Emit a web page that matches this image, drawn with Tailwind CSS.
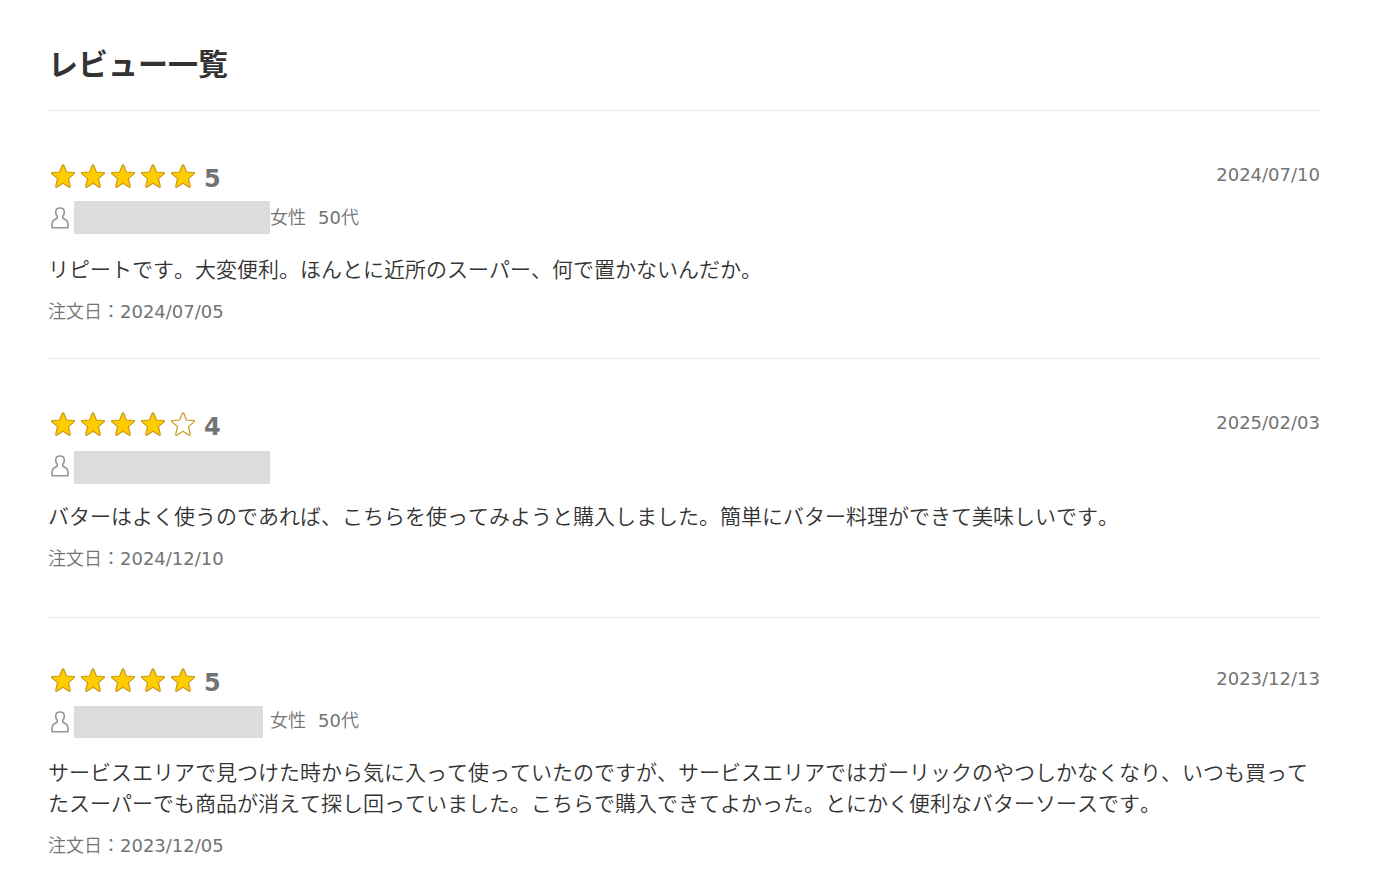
<!DOCTYPE html>
<html lang="ja">
<head>
  <meta charset="UTF-8">
  <meta name="viewport" content="width=device-width, initial-scale=1.0">
  <title>レビュー一覧</title>
  <script src="https://cdn.jsdelivr.net/npm/@tailwindcss/browser@4"></script>
</head>
<body class="bg-white text-[#333] font-['DejaVu_Sans','Noto_Sans_CJK_JP',sans-serif] [font-kerning:none]">

  <!-- アイコン -->
  <svg class="hidden" aria-hidden="true">
    <symbol id="star" viewBox="0 0 30 30">
      <path d="M15 2.8 Q15.5 2.8 15.9 3.8 L18.4 10 L25.6 10.6 Q27.2 10.9 25.9 12.1 L20.5 16.6 L22.2 24 Q22.4 25.9 20.8 25 L15 21.3 L9.2 25 Q7.6 25.9 7.8 24 L9.5 16.6 L4.1 12.1 Q2.8 10.9 4.4 10.6 L11.6 10 L14.1 3.8 Q14.5 2.8 15 2.8 Z" stroke="#c99a1c" stroke-width="1.2" stroke-linejoin="round"/>
    </symbol>
    <symbol id="user" viewBox="0 0 18 22">
      <path d="M9 1 C6 1 4.7 2.8 4.7 5.2 C4.7 7.2 5.4 8.2 6.2 9.2 C6.9 10.7 6.2 11.5 4.3 12.3 C1.9 13.4 1 15.2 1 17.6 V20.8 H17 V17.6 C17 15.2 16.1 13.4 13.7 12.3 C11.8 11.5 11.1 10.7 11.8 9.2 C12.6 8.2 13.3 7.2 13.3 5.2 C13.3 2.8 12 1 9 1 Z" fill="none" stroke="#949494" stroke-width="1.6" stroke-linejoin="round"/>
    </symbol>
  </svg>

  <main class="pt-10 pl-12 pr-[55px]">
    <h1 class="text-[30px] leading-[50px] font-bold pb-5">レビュー一覧</h1>

    <!-- レビュー 1 -->
    <article class="border-t border-[#ebebeb] pt-[50px] pb-8">
      <div class="flex justify-between">
        <div class="flex items-center h-8">
          <div class="flex text-[#fc0]" role="img" aria-label="5つ星のうち5">
            <svg class="size-[30px] fill-current"><use href="#star"/></svg>
            <svg class="size-[30px] fill-current"><use href="#star"/></svg>
            <svg class="size-[30px] fill-current"><use href="#star"/></svg>
            <svg class="size-[30px] fill-current"><use href="#star"/></svg>
            <svg class="size-[30px] fill-current"><use href="#star"/></svg>
          </div>
          <span class="pl-1.5 pt-1 text-2xl font-bold text-[#737373]">5</span>
        </div>
        <time class="text-lg leading-7 text-[#737373]">2024/07/10</time>
      </div>
      <div class="flex items-start mt-2 h-[34px] pl-[3px] text-lg text-[#737373]">
        <svg class="w-[18px] h-[22px] mt-1.5 mr-[5px]"><use href="#user"/></svg>
        <span class="w-[196px] h-[33px] bg-[#dcdcdc]"></span>
        <span class="leading-[34px] font-[350]">女性</span>
        <span class="leading-[34px] ml-3">50<span class="font-[350]">代</span></span>
      </div>
      <p class="mt-5 text-[21px] leading-[31px] font-[350]">リピートです。大変便利。ほんとに近所のスーパー、何で置かないんだか。</p>
      <p class="mt-3 text-lg leading-7 text-[#737373]"><span class="font-[350]">注文日：</span>2024/07/05</p>
    </article>

    <!-- レビュー 2 -->
    <article class="border-t border-[#ebebeb] pt-[50px] pb-11">
      <div class="flex justify-between">
        <div class="flex items-center h-8">
          <div class="flex text-[#fc0]" role="img" aria-label="5つ星のうち4">
            <svg class="size-[30px] fill-current"><use href="#star"/></svg>
            <svg class="size-[30px] fill-current"><use href="#star"/></svg>
            <svg class="size-[30px] fill-current"><use href="#star"/></svg>
            <svg class="size-[30px] fill-current"><use href="#star"/></svg>
            <svg class="size-[30px] fill-white"><use href="#star"/></svg>
          </div>
          <span class="pl-1.5 pt-1 text-2xl font-bold text-[#737373]">4</span>
        </div>
        <time class="text-lg leading-7 text-[#737373]">2025/02/03</time>
      </div>
      <div class="flex items-start mt-2 h-[33px] pl-[3px] text-lg text-[#737373]">
        <svg class="w-[18px] h-[22px] mt-1.5 mr-[5px]"><use href="#user"/></svg>
        <span class="w-[196px] h-[33px] mt-0.5 bg-[#dcdcdc]"></span>
      </div>
      <p class="mt-5 text-[21px] leading-[31px] font-[350]">バターはよく使うのであれば、こちらを使ってみようと購入しました。簡単にバター料理ができて美味しいです。</p>
      <p class="mt-3 text-lg leading-7 text-[#737373]"><span class="font-[350]">注文日：</span>2024/12/10</p>
    </article>

    <!-- レビュー 3 -->
    <article class="border-t border-[#ebebeb] pt-[47px]">
      <div class="flex justify-between">
        <div class="flex items-center h-8">
          <div class="flex text-[#fc0]" role="img" aria-label="5つ星のうち5">
            <svg class="size-[30px] fill-current"><use href="#star"/></svg>
            <svg class="size-[30px] fill-current"><use href="#star"/></svg>
            <svg class="size-[30px] fill-current"><use href="#star"/></svg>
            <svg class="size-[30px] fill-current"><use href="#star"/></svg>
            <svg class="size-[30px] fill-current"><use href="#star"/></svg>
          </div>
          <span class="pl-1.5 pt-1 text-2xl font-bold text-[#737373]">5</span>
        </div>
        <time class="text-lg leading-7 text-[#737373]">2023/12/13</time>
      </div>
      <div class="flex items-start mt-2 h-[33px] pl-[3px] text-lg text-[#737373]">
        <svg class="w-[18px] h-[22px] mt-1.5 mr-[5px]"><use href="#user"/></svg>
        <span class="w-[189px] h-8 mt-px mr-[7px] bg-[#dcdcdc]"></span>
        <span class="leading-8 font-[350]">女性</span>
        <span class="leading-8 ml-3">50<span class="font-[350]">代</span></span>
      </div>
      <p class="mt-5 text-[21px] leading-[31px] font-[350]">サービスエリアで見つけた時から気に入って使っていたのですが、サービスエリアではガーリックのやつしかなくなり、いつも買ってたスーパーでも商品が消えて探し回っていました。こちらで購入できてよかった。とにかく便利なバターソースです。</p>
      <p class="mt-3 text-lg leading-7 text-[#737373]"><span class="font-[350]">注文日：</span>2023/12/05</p>
    </article>
  </main>

</body>
</html>
